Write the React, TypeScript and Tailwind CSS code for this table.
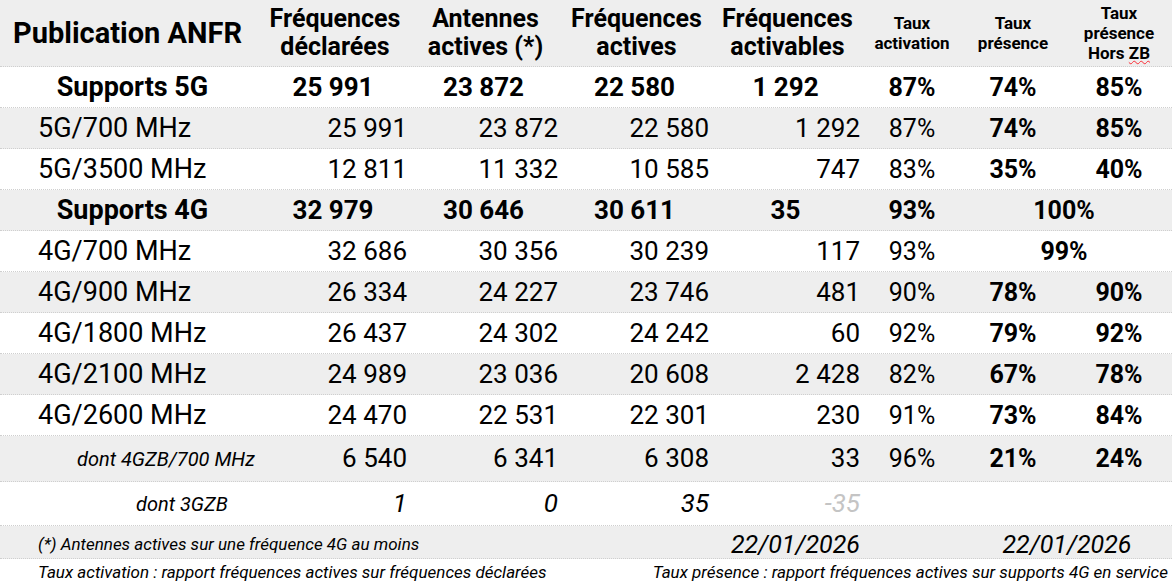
import React from "react";

const cols = "grid grid-cols-[265px_150px_151px_151px_151px_88px_114px_102px]";
const rowBase = `${cols} items-center border-b border-dotted border-[#cfcfcf]`;

type Detail = {
  label: string;
  vals: string[];
  act: string;
  pres: string;
  hors?: string;
  merged?: boolean;
  bg: string;
};

const details5g: Detail[] = [
  { label: "5G/700 MHz", vals: ["25 991", "23 872", "22 580", "1 292"], act: "87%", pres: "74%", hors: "85%", bg: "bg-[#eeeeee]" },
  { label: "5G/3500 MHz", vals: ["12 811", "11 332", "10 585", "747"], act: "83%", pres: "35%", hors: "40%", bg: "bg-white" },
];

const details4g: Detail[] = [
  { label: "4G/700 MHz", vals: ["32 686", "30 356", "30 239", "117"], act: "93%", pres: "99%", merged: true, bg: "bg-white" },
  { label: "4G/900 MHz", vals: ["26 334", "24 227", "23 746", "481"], act: "90%", pres: "78%", hors: "90%", bg: "bg-[#eeeeee]" },
  { label: "4G/1800 MHz", vals: ["26 437", "24 302", "24 242", "60"], act: "92%", pres: "79%", hors: "92%", bg: "bg-white" },
  { label: "4G/2100 MHz", vals: ["24 989", "23 036", "20 608", "2 428"], act: "82%", pres: "67%", hors: "78%", bg: "bg-[#eeeeee]" },
  { label: "4G/2600 MHz", vals: ["24 470", "22 531", "22 301", "230"], act: "91%", pres: "73%", hors: "84%", bg: "bg-white" },
];

function DetailRow({ d }: { d: Detail }) {
  return (
    <div className={`${rowBase} h-[41px] ${d.bg}`}>
      <div className="pl-[38px] text-[27px]">{d.label}</div>
      {d.vals.map((v, i) => (
        <div key={i} className="pr-[8px] text-right text-[26px]">{v}</div>
      ))}
      <div className="text-center text-[25px]">{d.act}</div>
      {d.merged ? (
        <div className="col-span-2 text-center text-[25px] font-bold">{d.pres}</div>
      ) : (
        <>
          <div className="text-center text-[25px] font-bold">{d.pres}</div>
          <div className="pr-[4px] text-center text-[25px] font-bold">{d.hors}</div>
        </>
      )}
    </div>
  );
}

function SummaryRow({
  label, vals, act, pres, hors, bg,
}: { label: string; vals: string[]; act: string; pres: string; hors?: string; bg: string }) {
  return (
    <div className={`${rowBase} h-[41px] ${bg} font-bold`}>
      <div className="text-center text-[27px]">{label}</div>
      {vals.map((v, i) => (
        <div key={i} className="pr-[14px] text-center text-[26px]">{v}</div>
      ))}
      <div className="text-center text-[25px]">{act}</div>
      {hors ? (
        <>
          <div className="text-center text-[25px]">{pres}</div>
          <div className="pr-[4px] text-center text-[25px]">{hors}</div>
        </>
      ) : (
        <div className="col-span-2 text-center text-[25px]">{pres}</div>
      )}
    </div>
  );
}

export default function App() {
  return (
    <div className="w-[1172px] h-[586px] overflow-hidden bg-white text-black font-['Roboto',sans-serif]">
      {/* header */}
      <div className={`${rowBase} h-[67px] bg-[#eeeeee] font-bold`}>
        <div className="pl-[13px] text-[29px] leading-none">Publication ANFR</div>
        <div className="pr-[10px] text-center text-[25px] leading-[28px]">Fréquences<br />déclarées</div>
        <div className="pr-[10px] text-center text-[25px] leading-[28px]">Antennes<br />actives (*)</div>
        <div className="pr-[10px] text-center text-[25px] leading-[28px]">Fréquences<br />actives</div>
        <div className="pr-[10px] text-center text-[25px] leading-[28px]">Fréquences<br />activables</div>
        <div className="text-center text-[17px] leading-[20px]">Taux<br />activation</div>
        <div className="text-center text-[17px] leading-[20px]">Taux<br />présence</div>
        <div className="pr-[4px] text-center text-[17px] leading-[20px]">
          Taux<br />présence<br />Hors <span className="underline decoration-wavy decoration-red-500 decoration-1">ZB</span>
        </div>
      </div>

      <SummaryRow label="Supports 5G" vals={["25 991", "23 872", "22 580", "1 292"]} act="87%" pres="74%" hors="85%" bg="bg-white" />
      {details5g.map((d) => <DetailRow key={d.label} d={d} />)}
      <SummaryRow label="Supports 4G" vals={["32 979", "30 646", "30 611", "35"]} act="93%" pres="100%" bg="bg-[#eeeeee]" />
      {details4g.map((d) => <DetailRow key={d.label} d={d} />)}

      {/* dont 4GZB */}
      <div className={`${rowBase} h-[46px] bg-[#eeeeee]`}>
        <div className="pl-[77px] text-[20px] italic">dont 4GZB/700 MHz</div>
        <div className="pr-[8px] text-right text-[26px]">6 540</div>
        <div className="pr-[8px] text-right text-[26px]">6 341</div>
        <div className="pr-[8px] text-right text-[26px]">6 308</div>
        <div className="pr-[8px] text-right text-[26px]">33</div>
        <div className="text-center text-[25px]">96%</div>
        <div className="text-center text-[25px] font-bold">21%</div>
        <div className="pr-[4px] text-center text-[25px] font-bold">24%</div>
      </div>

      {/* dont 3GZB */}
      <div className={`${rowBase} h-[44px] bg-white italic`}>
        <div className="pl-[136px] text-[20px]">dont 3GZB</div>
        <div className="pr-[8px] text-right text-[26px]">1</div>
        <div className="pr-[8px] text-right text-[26px]">0</div>
        <div className="pr-[8px] text-right text-[26px]">35</div>
        <div className="pr-[8px] text-right text-[26px] text-[#c4c4c4]">-35</div>
        <div />
        <div />
        <div />
      </div>

      {/* footer note + dates */}
      <div className={`${rowBase} h-[33px] bg-[#eeeeee] italic`}>
        <div className="col-span-4 pl-[38px] text-[17px]">(*) Antennes actives sur une fréquence 4G au moins</div>
        <div className="pr-[8px] text-right text-[25px]">22/01/2026</div>
        <div />
        <div className="col-span-2 pl-[6px] text-center text-[25px]">22/01/2026</div>
      </div>

      <div className="flex h-[27px] items-center justify-between bg-white pl-[38px] pr-[4px] text-[17px] italic">
        <span>Taux activation : rapport fréquences actives sur fréquences déclarées</span>
        <span>Taux présence : rapport fréquences actives sur supports 4G en service</span>
      </div>
    </div>
  );
}
